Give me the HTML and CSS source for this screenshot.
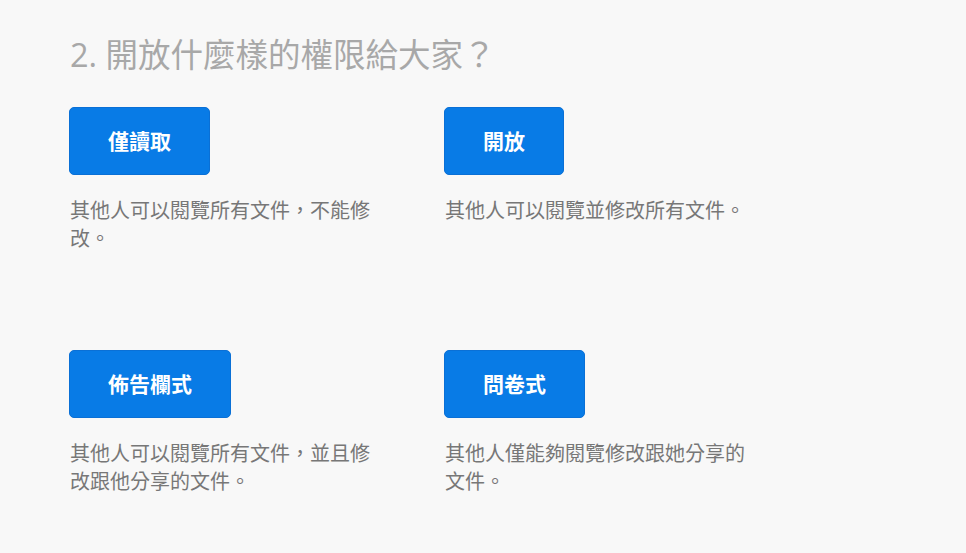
FILE: index.html
```html
<!DOCTYPE html>
<html lang="zh-Hant">
<head>
<meta charset="utf-8">
<link rel="stylesheet" href="styles.css">
</head>
<body>
<main class="page">
  <h2 class="title">2. 開放什麼樣的權限給大家？</h2>
  <div class="options">
    <div class="option">
      <button class="btn">僅讀取</button>
      <p class="desc">其他人可以閱覽所有文件，不能修改。</p>
    </div>
    <div class="option">
      <button class="btn">開放</button>
      <p class="desc">其他人可以閱覽並修改所有文件。</p>
    </div>
    <div class="option">
      <button class="btn">佈告欄式</button>
      <p class="desc">其他人可以閱覽所有文件，並且修改跟他分享的文件。</p>
    </div>
    <div class="option">
      <button class="btn">問卷式</button>
      <p class="desc">其他人僅能夠閱覽修改跟她分享的文件。</p>
    </div>
  </div>
</main>
</body>
</html>
```

FILE: styles.css
```css
html, body {
  margin: 0;
  padding: 0;
  background: #f8f8f8;
}
body {
  font-family: "Open Sans", "Noto Sans CJK TC", sans-serif;
  width: 966px;
  height: 553px;
  overflow: hidden;
}
.page {
  padding: 35px 0 0 69px;
}
.title {
  margin: 0;
  font-size: 32.5px;
  line-height: 40px;
  font-weight: 400;
  color: #a8a8a8;
  padding-left: 1px;
}
.options {
  margin-top: 32px;
  display: grid;
  grid-template-columns: 300px 300px;
  column-gap: 75px;
  row-gap: 97px;
  align-items: start;
}
.option {
  display: flex;
  flex-direction: column;
  align-items: flex-start;
}
.btn {
  font-family: "Open Sans", "Noto Sans CJK TC", sans-serif;
  font-size: 21px;
  font-weight: 700;
  color: #ffffff;
  background: #087be6;
  border: 1px solid #0a70d6;
  border-radius: 5px;
  height: 68px;
  padding: 0 38px;
  line-height: 1;
  cursor: pointer;
}
.desc {
  margin: 22px 0 0 1px;
  width: 300px;
  font-size: 20px;
  line-height: 28px;
  color: #777777;
}
```
